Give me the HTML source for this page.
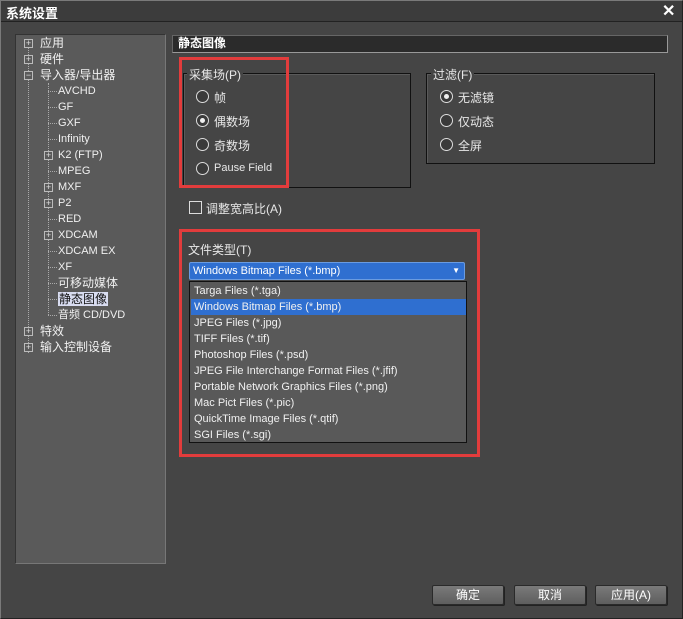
<!DOCTYPE html>
<html><head><meta charset="utf-8"><style>
*{margin:0;padding:0;box-sizing:border-box}
body{width:683px;height:619px;background:#454545;font-family:"Liberation Sans","Noto Sans CJK SC",sans-serif;color:#e8e8e8;font-size:12px;position:relative;overflow:hidden}
.a{position:absolute;white-space:nowrap}
#win{position:absolute;left:0;top:0;width:683px;height:619px;border:1px solid #7a7a7a;border-right-color:#222;border-bottom-color:#222}
#title{position:absolute;left:1px;top:1px;width:681px;height:21px;background:#3c3c3c;border-bottom:1px solid #222}
#tree{position:absolute;left:15px;top:34px;width:151px;height:530px;background:#5a5a5a;border:1px solid #333;border-right-color:#777;border-bottom-color:#777}
.t{position:absolute;font-size:12px;line-height:14px;color:#f0f0f0}
.pb{position:absolute;width:9px;height:9px;border:1px solid #bbb;background:#5a5a5a;font-size:9px;line-height:7px;text-align:center;color:#ddd}
.dot{position:absolute;border-top:1px dotted #aaa;width:10px}
.vl{position:absolute;border-left:1px dotted #aaa}
.grp{position:absolute;border:1px solid #111;box-shadow:1px 1px 0 #5a5a5a inset}
.red{position:absolute;border:3px solid #e23c3c}
.rad{position:absolute;width:13px;height:13px;border:1px solid #ddd;border-radius:50%;background:#3a3a3a}
.rad.on::after{content:"";position:absolute;left:3px;top:3px;width:5px;height:5px;border-radius:50%;background:#eee}
.btn{position:absolute;top:585px;height:20px;background:linear-gradient(#7a7a7a,#5e5e5e);border:1px solid #2a2a2a;border-radius:2px;text-align:center;line-height:18px;font-size:12px;color:#fff;box-shadow:1px 1px 0 #222}
.li{position:absolute;left:1px;width:275px;height:16px;line-height:16px;padding-left:3px;font-size:11px;color:#f0f0f0}
</style></head><body>
<div id="win"></div>
<div id="title"></div>
<div class="a" style="left:6px;top:3px;font-size:13px;font-weight:bold;color:#fff">系统设置</div>
<div class="a" style="left:662px;top:1px;font-size:16px;font-weight:bold;color:#fff">✕</div>

<div id="tree">
<div class="vl" style="left:12px;top:13px;height:305px"></div>
<div class="vl" style="left:32px;top:48px;height:232px"></div>
</div>
<div id="tr"></div>

<div class="a" style="left:172px;top:35px;width:496px;height:18px;background:#2b2b2b;border:1px solid #999;border-left-color:#666;border-top-color:#666"></div>
<div class="a" style="left:178px;top:35px;font-weight:bold;font-size:12px;line-height:16px;color:#fff">静态图像</div>

<div class="grp" style="left:183px;top:73px;width:228px;height:115px"></div>
<div class="a" style="left:187px;top:66px;background:#454545;padding:0 2px">采集场(P)</div>
<div class="grp" style="left:426px;top:73px;width:229px;height:91px"></div>
<div class="a" style="left:431px;top:66px;background:#454545;padding:0 2px">过滤(F)</div>
<div class="red" style="left:179px;top:57px;width:110px;height:131px"></div>

<div class="rad" style="left:196px;top:90px"></div><div class="a" style="left:214px;top:89px">帧</div>
<div class="rad on" style="left:196px;top:114px"></div><div class="a" style="left:214px;top:113px">偶数场</div>
<div class="rad" style="left:196px;top:138px"></div><div class="a" style="left:214px;top:137px">奇数场</div>
<div class="rad" style="left:196px;top:162px"></div><div class="a" style="left:214px;top:162px;font-size:11px">Pause Field</div>

<div class="rad on" style="left:440px;top:90px"></div><div class="a" style="left:458px;top:89px">无滤镜</div>
<div class="rad" style="left:440px;top:114px"></div><div class="a" style="left:458px;top:113px">仅动态</div>
<div class="rad" style="left:440px;top:138px"></div><div class="a" style="left:458px;top:137px">全屏</div>

<div class="a" style="left:189px;top:201px;width:13px;height:13px;border:1px solid #ddd"></div>
<div class="a" style="left:206px;top:200px">调整宽高比(A)</div>

<div class="red" style="left:179px;top:229px;width:301px;height:228px"></div>
<div class="a" style="left:188px;top:241px">文件类型(T)</div>
<div class="a" style="left:189px;top:262px;width:276px;height:18px;background:#2f6fd0;border:1px solid #6a9be0;border-radius:2px;font-size:11px;line-height:16px;padding-left:3px;color:#fff">Windows Bitmap Files (*.bmp)<span style="position:absolute;right:4px;top:0;font-size:8px">▼</span></div>
<div class="a" style="left:189px;top:281px;width:278px;height:162px;background:#595959;border:1px solid #111">
<div class="li" style="top:1px">Targa Files (*.tga)</div>
<div class="li" style="top:17px;background:#2f6fd0">Windows Bitmap Files (*.bmp)</div>
<div class="li" style="top:33px">JPEG Files (*.jpg)</div>
<div class="li" style="top:49px">TIFF Files (*.tif)</div>
<div class="li" style="top:65px">Photoshop Files (*.psd)</div>
<div class="li" style="top:81px">JPEG File Interchange Format Files (*.jfif)</div>
<div class="li" style="top:97px">Portable Network Graphics Files (*.png)</div>
<div class="li" style="top:113px">Mac Pict Files (*.pic)</div>
<div class="li" style="top:129px">QuickTime Image Files (*.qtif)</div>
<div class="li" style="top:145px">SGI Files (*.sgi)</div>
</div>

<div class="btn" style="left:432px;width:72px">确定</div>
<div class="btn" style="left:514px;width:72px">取消</div>
<div class="btn" style="left:595px;width:72px">应用(A)</div>

<script>
var items=[[0,"应用",1],[0,"硬件",1],[0,"导入器/导出器",2],[1,"AVCHD"],[1,"GF"],[1,"GXF"],[1,"Infinity"],[1,"K2 (FTP)",1],[1,"MPEG"],[1,"MXF",1],[1,"P2",1],[1,"RED"],[1,"XDCAM",1],[1,"XDCAM EX"],[1,"XF"],[1,"可移动媒体"],[1,"静态图像",0,1],[1,"音频 CD/DVD"],[0,"特效",1],[0,"输入控制设备",1]];
var h="";
items.forEach(function(it,i){
 var y=36+i*16; var lv=it[0];
 var tx=lv?58:40; var bx=lv?44:24;
 if(it[2]) h+='<div class="pb" style="left:'+bx+'px;top:'+(y+3)+'px">'+(it[2]==2?'−':'+')+'</div>';
 else h+='<div class="dot" style="left:'+(bx+4)+'px;top:'+(y+7)+'px;width:'+(tx-bx-5)+'px"></div>';
 var st=it[3]?'background:#d8dcf0;color:#111;padding:0 1px;':'';
 var fs=/[A-Za-z]/.test(it[1])&&lv?'font-size:11px;':'';
 h+='<div class="t" style="left:'+tx+'px;top:'+y+'px;'+st+fs+'">'+it[1]+'</div>';
});
document.getElementById("tr").innerHTML=h;
</script>
</body></html>
